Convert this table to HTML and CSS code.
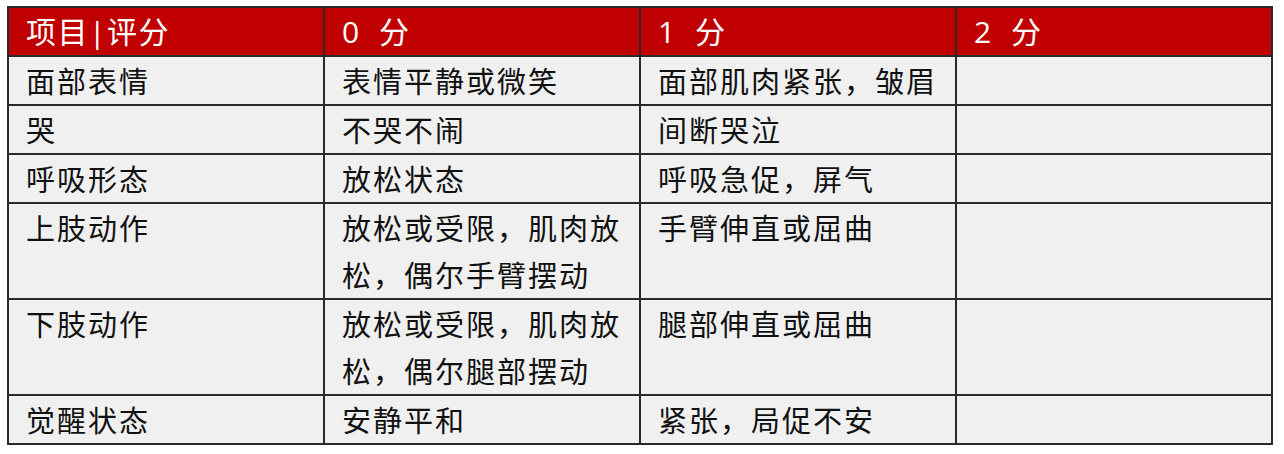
FILE: index.html
```html
<!DOCTYPE html>
<html lang="zh-CN">
<head>
<meta charset="utf-8">
<link rel="stylesheet" href="styles.css">
</head>
<body>
<table class="score">
  <colgroup>
    <col class="c"><col class="c"><col class="c"><col class="c">
  </colgroup>
  <thead>
    <tr class="head">
      <th>项目|评分</th>
      <th>0 分</th>
      <th>1 分</th>
      <th>2 分</th>
    </tr>
  </thead>
  <tbody>
    <tr><td>面部表情</td><td>表情平静或微笑</td><td>面部肌肉紧张，皱眉</td><td></td></tr>
    <tr><td>哭</td><td>不哭不闹</td><td>间断哭泣</td><td></td></tr>
    <tr><td>呼吸形态</td><td>放松状态</td><td>呼吸急促，屏气</td><td></td></tr>
    <tr><td>上肢动作</td><td>放松或受限，肌肉放松，偶尔手臂摆动</td><td>手臂伸直或屈曲</td><td></td></tr>
    <tr><td>下肢动作</td><td>放松或受限，肌肉放松，偶尔腿部摆动</td><td>腿部伸直或屈曲</td><td></td></tr>
    <tr><td>觉醒状态</td><td>安静平和</td><td>紧张，局促不安</td><td></td></tr>
  </tbody>
</table>
</body>
</html>
```

FILE: styles.css
```css
html, body {
  margin: 0;
  padding: 0;
  background: #ffffff;
}

body {
  padding: 6px 0 0 7px;
}

.score {
  border-collapse: collapse;
  table-layout: fixed;
  width: 1266px;
  font-family: "Noto Sans CJK SC", sans-serif;
}

.score .c {
  width: 316px;
}

.score th,
.score td {
  border: 2px solid #2a2a2a;
  padding: 0 10px 0 17px;
  vertical-align: top;
  text-align: left;
  font-size: 29px;
  letter-spacing: 2px;
  line-height: 47px;
  font-weight: 400;
}

.head th {
  background: #c00000;
  color: #ffffff;
  height: 47px;
  font-family: "Open Sans", "Noto Sans CJK SC", sans-serif;
  font-size: 30px;
  letter-spacing: 1.5px;
  word-spacing: 9px;
}

.score td {
  background: #f0f0f0;
  color: #111111;
  height: 47px;
}
```
